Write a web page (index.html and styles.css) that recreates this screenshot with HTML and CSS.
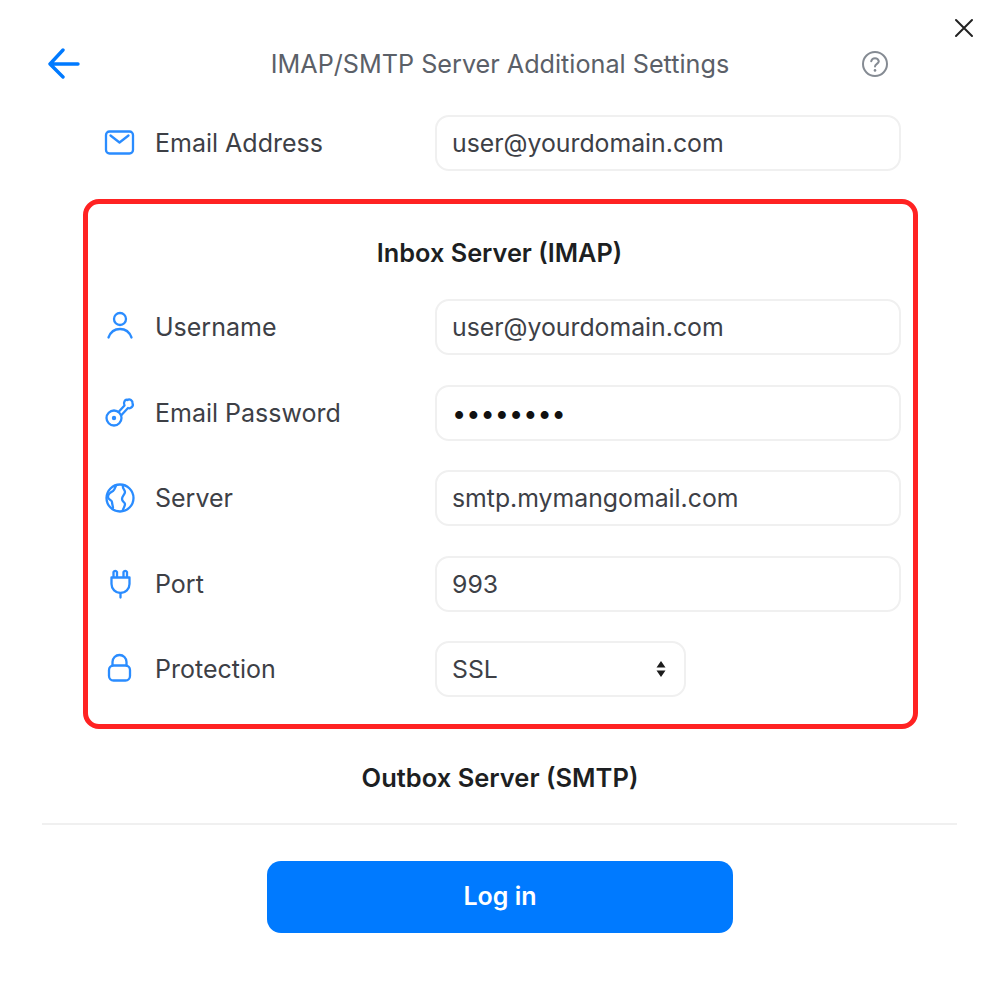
FILE: index.html
```html
<!DOCTYPE html>
<html lang="en">
<head>
<meta charset="utf-8">
<title>IMAP/SMTP Server Additional Settings</title>
<link rel="stylesheet" href="styles.css">
</head>
<body>
<main class="dialog">
  <svg class="close" width="20" height="20" viewBox="0 0 20 20"><path d="M2 2 18 18M18 2 2 18" fill="none" stroke="#222" stroke-width="2" stroke-linecap="round"/></svg>
  <header class="head">
    <svg class="back" width="34" height="32" viewBox="0 0 34 32"><path d="M16 2 3 16l13 13M3 16h28" fill="none" stroke="#007aff" stroke-width="3.4" stroke-linecap="round" stroke-linejoin="round"/></svg>
    <h1 class="title">IMAP/SMTP Server Additional Settings</h1>
    <svg class="help" width="28" height="28" viewBox="0 0 28 28" fill="none" stroke="#858b93" stroke-width="2"><circle cx="14" cy="14" r="12"/><path d="M10.2 11.2a3.9 3.9 0 0 1 7.6 0c0 2.6-3.8 2.800-3.800 5.400" stroke-linecap="round"/><circle cx="14" cy="20.400" r="1.300" fill="#858b93" stroke="none"/></svg>
  </header>

  <div class="row row-top">
    <svg class="icon" viewBox="0 0 32 32"><rect x="2" y="4.500" width="27" height="22" rx="3.500"/><path d="M6.500 8.500l9 7 9-7"/></svg>
    <span class="label">Email Address</span>
    <div class="field">user@yourdomain.com</div>
  </div>

  <section class="panel">
    <h2 class="section-title">Inbox Server (IMAP)</h2>
    <div class="row">
      <svg class="icon" viewBox="0 0 32 32"><circle cx="16" cy="8" r="6"/><path d="M4.500 26.500c2-5.500 6.500-8.500 11.500-8.500s9.500 3 11.500 8.500"/></svg>
      <span class="label">Username</span>
      <div class="field">user@yourdomain.com</div>
    </div>
    <div class="row">
      <svg class="icon" viewBox="0 0 32 32"><circle cx="10" cy="21" r="7.500"/><circle cx="10" cy="21" r="2.200" fill="#2a8cff" stroke="none"/><path d="M14.500 15 20.500 8.500C19 5.500 21 2 23.500 3c2-1.500 5.500.5 5 3.200 1.500 3-2 6-4.500 4.800L17 18.500"/></svg>
      <span class="label">Email Password</span>
      <div class="field field-dots">••••••••</div>
    </div>
    <div class="row">
      <svg class="icon" viewBox="0 0 32 32"><circle cx="16" cy="16" r="13.500"/><path d="M12 3.500c-1 2.500-1.500 4.500-3 5.500-2 1-5 3-5 6s4 3 4 5 1 4 1 6M19 3.500c-1 3 2 4 2 6.500s-3 4-3 7 3 3 3 5-1 3-2 5.500"/></svg>
      <span class="label">Server</span>
      <div class="field">smtp.mymangomail.com</div>
    </div>
    <div class="row">
      <svg class="icon" viewBox="0 0 32 32"><path d="M9.500 9V4a2 2 0 0 1 3.500 0v5M19.500 9V4a2 2 0 0 1 3.500 0v5M7.500 9.500h18v6.500a9 9 0 0 1-18 0zM16.500 25v4.500"/></svg>
      <span class="label">Port</span>
      <div class="field">993</div>
    </div>
    <div class="row">
      <svg class="icon" viewBox="0 0 32 32"><rect x="5" y="12.500" width="21" height="15" rx="4.500"/><path d="M8.500 12.500V9a7 7 0 0 1 14 0v3.500"/></svg>
      <span class="label">Protection</span>
      <div class="field field-select">
        <span>SSL</span>
        <svg class="updown" width="10" height="16" viewBox="0 0 10 16"><path d="M5 0l4.500 6.500h-9zM5 16 .5 9.500h9z" fill="#1c1c1c"/></svg>
      </div>
    </div>
  </section>

  <h2 class="section-title outbox">Outbox Server (SMTP)</h2>
  <hr class="rule">
  <div class="actions"><button class="login" type="button">Log in</button></div>
</main>
</body>
</html>
```
FILE: styles.css
```css
* { box-sizing: border-box; }
html, body { margin: 0; background: #fff; }
body {
  font-family: Inter, "Liberation Sans", sans-serif;
  color: #3d4046;
}
.dialog {
  position: relative;
  width: 1000px;
  height: 982px;
  display: flex;
  flex-direction: column;
}
.close { position: absolute; left: 954px; top: 18px; }
.head {
  height: 32px;
  margin-top: 48px;
  padding: 0 47px;
  display: grid;
  grid-template-columns: 1fr auto 1fr;
  align-items: center;
}
.back { justify-self: start; }
.help { justify-self: end; margin-right: 64px; }
.title {
  margin: 0;
  font-size: 25.2px;
  font-weight: 400;
  color: #5b6068;
}
.row {
  height: 56px;
  display: flex;
  align-items: center;
  flex: none;
}
.row-top { margin: 35px 99px 0 104px; }
.icon {
  width: 32px;
  height: 32px;
  flex: none;
  fill: none;
  stroke: #2a8cff;
  stroke-width: 2.300;
  stroke-linecap: round;
  stroke-linejoin: round;
}
.label {
  width: 280px;
  margin-left: 19px;
  font-size: 25px;
  flex: none;
}
.field {
  width: 466px;
  height: 56px;
  padding: 0 15px;
  display: flex;
  align-items: center;
  border: 2px solid #f0f0f0;
  border-radius: 14px;
  font-size: 24.800px;
  flex: none;
}
.field-dots { color: #111; font-size: 25.300px; }
.field-select {
  width: 251px;
  justify-content: space-between;
  padding-right: 18px;
}
.panel {
  margin: 28px 82px 0 83px;
  height: 530px;
  padding: 32px 0 0 16px;
  display: flex;
  flex-direction: column;
  gap: 29.500px;
  border: 5px solid #ff2222;
  border-radius: 16px;
  flex: none;
}
.section-title {
  margin: 0;
  height: 34px;
  line-height: 34px;
  text-align: center;
  font-size: 25.300px;
  font-weight: 600;
  color: #1d1f22;
}
.panel .section-title { margin-left: -18px; margin-bottom: -.500px; }
.outbox { margin-top: 32px; font-size: 25.500px; }
.rule {
  margin: 28px 43px 0 42px;
  border: 0;
  height: 2px;
  background: #f0f0f0;
}
.actions { margin-top: 36px; display: flex; justify-content: center; }
.login {
  width: 466px;
  height: 72px;
  padding: 0 0 3px;
  border: 0;
  border-radius: 14px;
  background: #007aff;
  color: #fff;
  font: 600 25px Inter, "Liberation Sans", sans-serif;
}
```
